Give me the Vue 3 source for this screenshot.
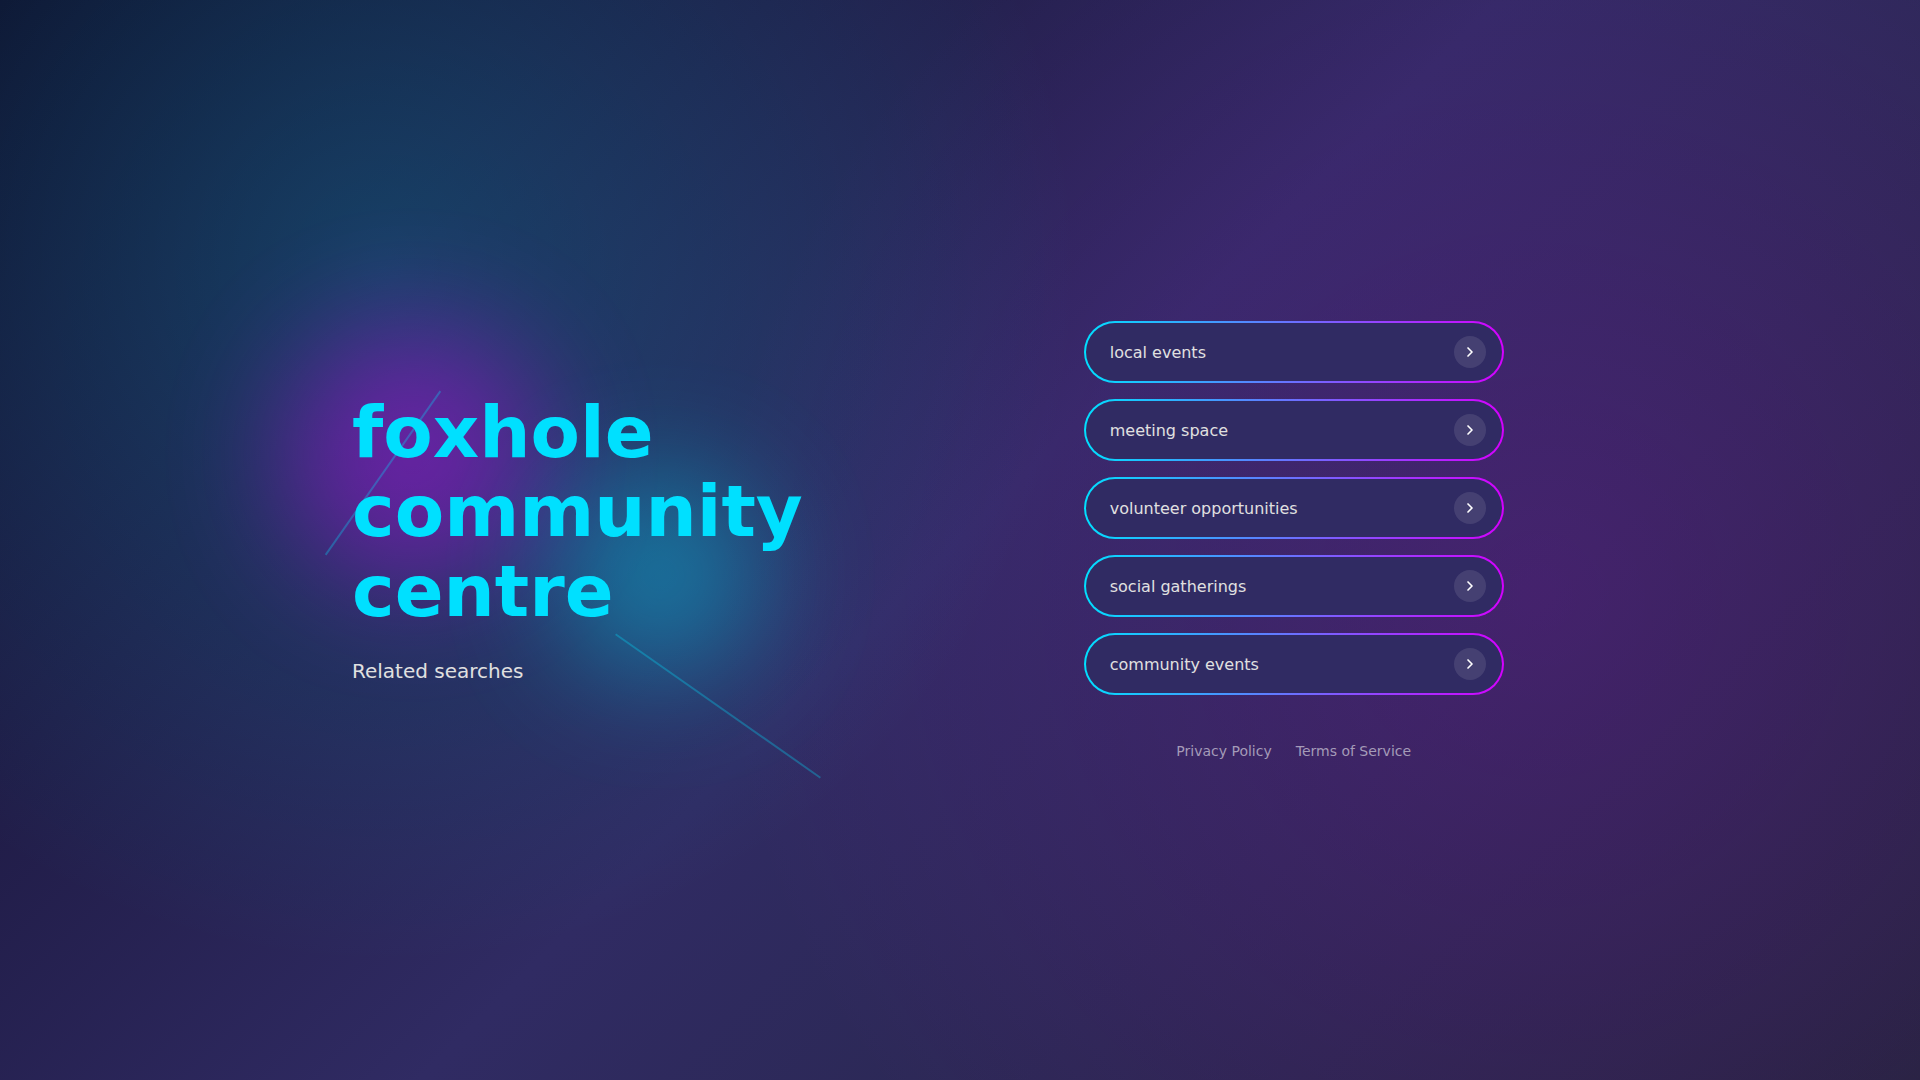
<script setup>
const searches = [
  'local events',
  'meeting space',
  'volunteer opportunities',
  'social gatherings',
  'community events'
]
</script>

<template>
  <div class="page">
    <main class="layout">
      <section class="hero">
        <div class="glow glow-violet"></div>
        <div class="glow glow-cyan"></div>
        <div class="streak streak-up"></div>
        <div class="streak streak-down"></div>
        <h1 class="title">foxhole community centre</h1>
        <p class="subtitle">Related searches</p>
      </section>
      <section class="panel">
        <nav class="searches" aria-label="Related searches">
          <a v-for="item in searches" :key="item" class="search" href="#">
            <span>{{ item }}</span>
            <span class="arrow">
              <svg
                viewBox="0 0 24 24"
                width="16"
                height="16"
                fill="none"
                stroke="#fff"
                stroke-width="2.5"
                stroke-linecap="round"
                stroke-linejoin="round"
                aria-hidden="true"
              >
                <path d="m9 18 6-6-6-6" />
              </svg>
            </span>
          </a>
        </nav>
        <footer class="legal">
          <a href="#">Privacy Policy</a>
          <a href="#">Terms of Service</a>
        </footer>
      </section>
    </main>
  </div>
</template>

<style>
body {
  margin: 0;
  background: #24243e;
}
</style>

<style scoped>
.page {
  min-height: 100vh;
  display: flex;
  align-items: center;
  justify-content: center;
  overflow: hidden;
  font-family: "DejaVu Sans", sans-serif;
  color: #e0e0e0;
  background:
    radial-gradient(circle at 20% 25%, rgba(0, 224, 255, 0.2) 0%, transparent 40%),
    radial-gradient(circle at 80% 55%, rgba(213, 0, 255, 0.15) 0%, transparent 50%),
    linear-gradient(135deg, #0f0c29 0%, #302b63 50%, #24243e 100%);
}

.layout {
  box-sizing: border-box;
  width: 100%;
  max-width: 1280px;
  padding: 32px;
  display: grid;
  grid-template-columns: 1.1fr 1fr;
  gap: 64px;
  align-items: center;
}

.hero {
  position: relative;
}

.glow {
  position: absolute;
  border-radius: 50%;
  filter: blur(60px);
}

.glow-violet {
  left: -70px;
  top: -68px;
  width: 260px;
  height: 260px;
  background: #d500ff;
  opacity: 0.4;
}

.glow-cyan {
  left: 208px;
  top: 82px;
  width: 200px;
  height: 200px;
  background: #00e0ff;
  opacity: 0.4;
}

.streak {
  position: absolute;
  height: 2px;
  background: #00e0ff;
  opacity: 0.3;
}

.streak-up {
  left: -69px;
  top: 79px;
  width: 200px;
  transform: rotate(-55deg);
}

.streak-down {
  left: 241px;
  top: 312px;
  width: 250px;
  transform: rotate(35deg);
}

.title {
  position: relative;
  margin: 0 0 24px;
  max-width: 500px;
  font-size: 72px;
  line-height: 1.1;
  font-weight: 700;
  color: #00e0ff;
}

.subtitle {
  position: relative;
  margin: 0;
  font-size: 20px;
  line-height: 32px;
}

.panel {
  display: flex;
  flex-direction: column;
  align-items: center;
  gap: 48px;
}

.searches {
  width: 100%;
  max-width: 420px;
  display: flex;
  flex-direction: column;
  gap: 16px;
}

.search {
  display: flex;
  align-items: center;
  justify-content: space-between;
  padding: 13px 16px 13px 24px;
  border: 2px solid transparent;
  border-radius: 32px;
  background:
    linear-gradient(#302b63, #302b63) padding-box,
    linear-gradient(90deg, #00e0ff, #d500ff) border-box;
  color: #e0e0e0;
  font-size: 16px;
  text-decoration: none;
}

.arrow {
  display: flex;
  align-items: center;
  justify-content: center;
  width: 32px;
  height: 32px;
  border-radius: 50%;
  background: rgba(255, 255, 255, 0.1);
}

.legal {
  display: flex;
  gap: 24px;
  font-size: 14px;
}

.legal a {
  color: #a49bb8;
  text-decoration: none;
}
</style>
